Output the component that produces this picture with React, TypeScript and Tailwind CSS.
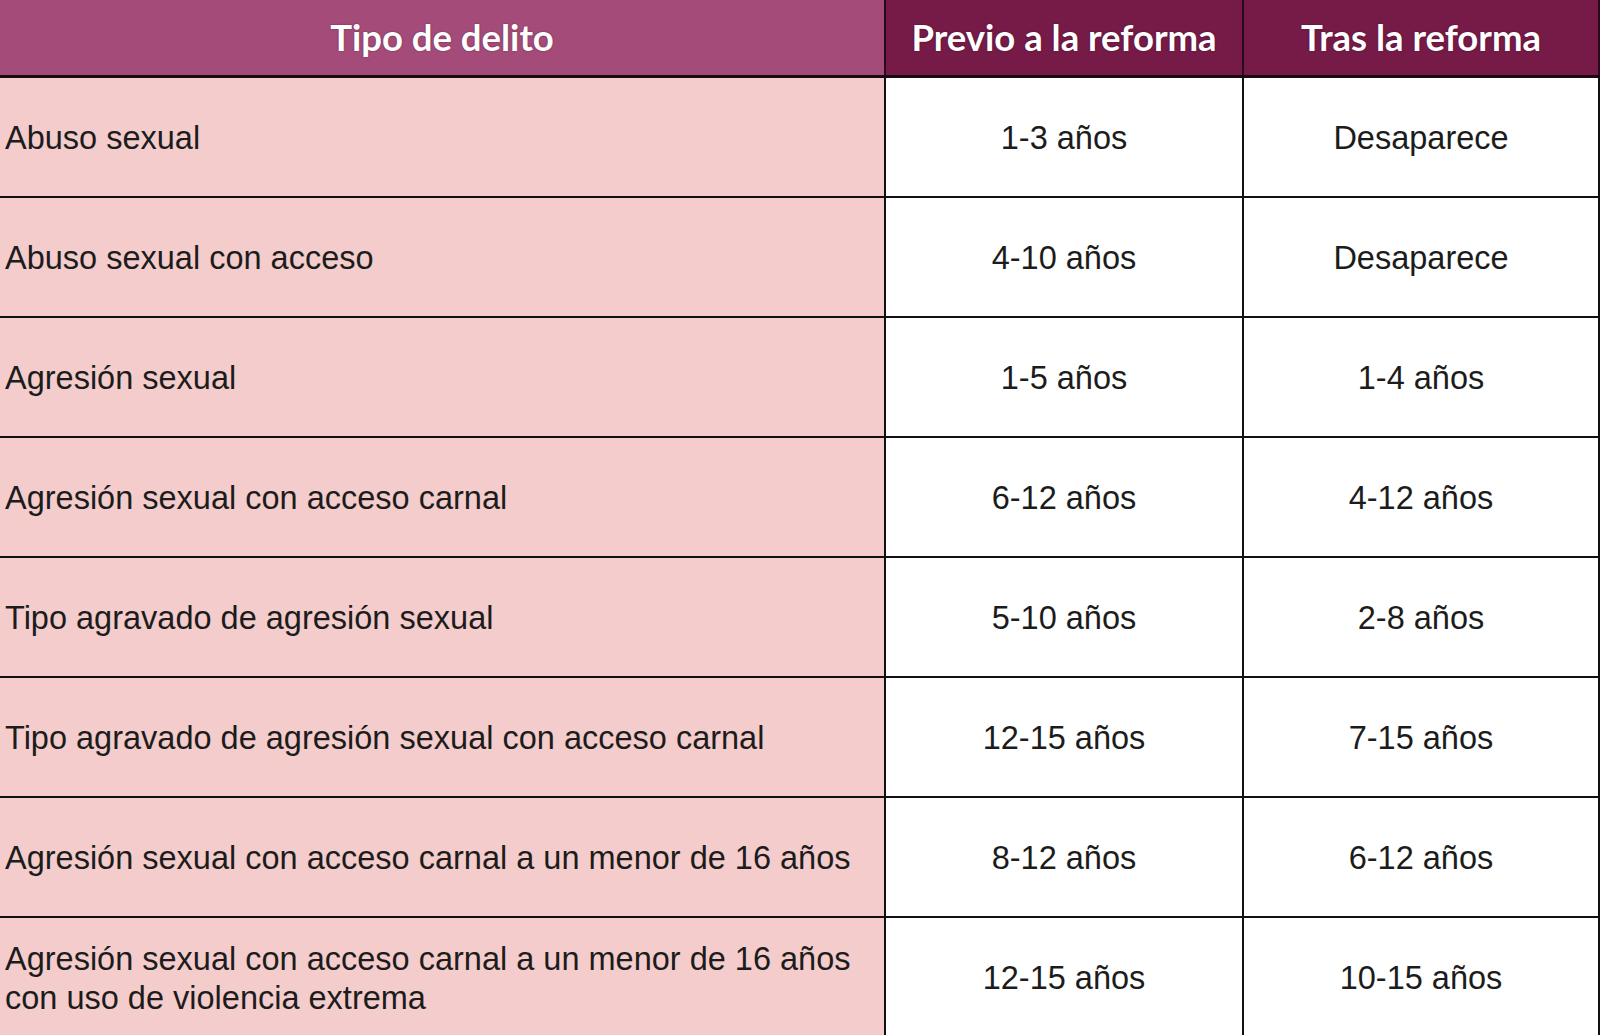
import React from "react";

const rows: [React.ReactNode, string, string][] = [
  ["Abuso sexual", "1-3 años", "Desaparece"],
  ["Abuso sexual con acceso", "4-10 años", "Desaparece"],
  ["Agresión sexual", "1-5 años", "1-4 años"],
  ["Agresión sexual con acceso carnal", "6-12 años", "4-12 años"],
  ["Tipo agravado de agresión sexual", "5-10 años", "2-8 años"],
  ["Tipo agravado de agresión sexual con acceso carnal", "12-15 años", "7-15 años"],
  ["Agresión sexual con acceso carnal a un menor de 16 años", "8-12 años", "6-12 años"],
  [
    <>
      Agresión sexual con acceso carnal a un menor de 16 años
      <br />
      con uso de violencia extrema
    </>,
    "12-15 años",
    "10-15 años",
  ],
];

export default function App() {
  return (
    <div className="w-[1600px] h-[1035px] overflow-hidden bg-white">
      <div
        className="flex h-[78px] border-b-[3px] border-[#1a0a12]"
        style={{ fontFamily: "Lato, 'Open Sans', sans-serif" }}
      >
        <div className="w-[884px] flex items-center justify-center bg-[#a44b79] text-white font-bold text-[36.5px] [text-shadow:0_0_2px_rgba(0,0,0,0.4)]">
          Tipo de delito
        </div>
        <div className="w-[358px] flex items-center justify-center bg-[#761a48] border-l-2 border-[#2a0a1a] text-white font-bold text-[36.5px] [text-shadow:0_0_2px_rgba(0,0,0,0.4)]">
          Previo a la reforma
        </div>
        <div className="w-[358px] flex items-center justify-center bg-[#761a48] border-l-2 border-r-2 border-[#2a0a1a] text-white font-bold text-[36.5px] [text-shadow:0_0_2px_rgba(0,0,0,0.4)]">
          Tras la reforma
        </div>
      </div>
      {rows.map((r, i) => (
        <div
          key={i}
          className="flex h-[120px] border-b-2 border-[#111] text-[#1c1c1c] text-[32.5px] leading-[39px]"
          style={{ fontFamily: "'Liberation Sans', Arial, sans-serif" }}
        >
          <div className="w-[884px] flex items-center bg-[#f4cccc] pl-[5px] pr-2 pt-[3px]">
            <span>{r[0]}</span>
          </div>
          <div className="w-[358px] flex items-center justify-center bg-white border-l-2 border-[#111] pt-[3px]">
            {r[1]}
          </div>
          <div className="w-[358px] flex items-center justify-center bg-white border-l-2 border-r-2 border-[#111] pt-[3px]">
            {r[2]}
          </div>
        </div>
      ))}
    </div>
  );
}
